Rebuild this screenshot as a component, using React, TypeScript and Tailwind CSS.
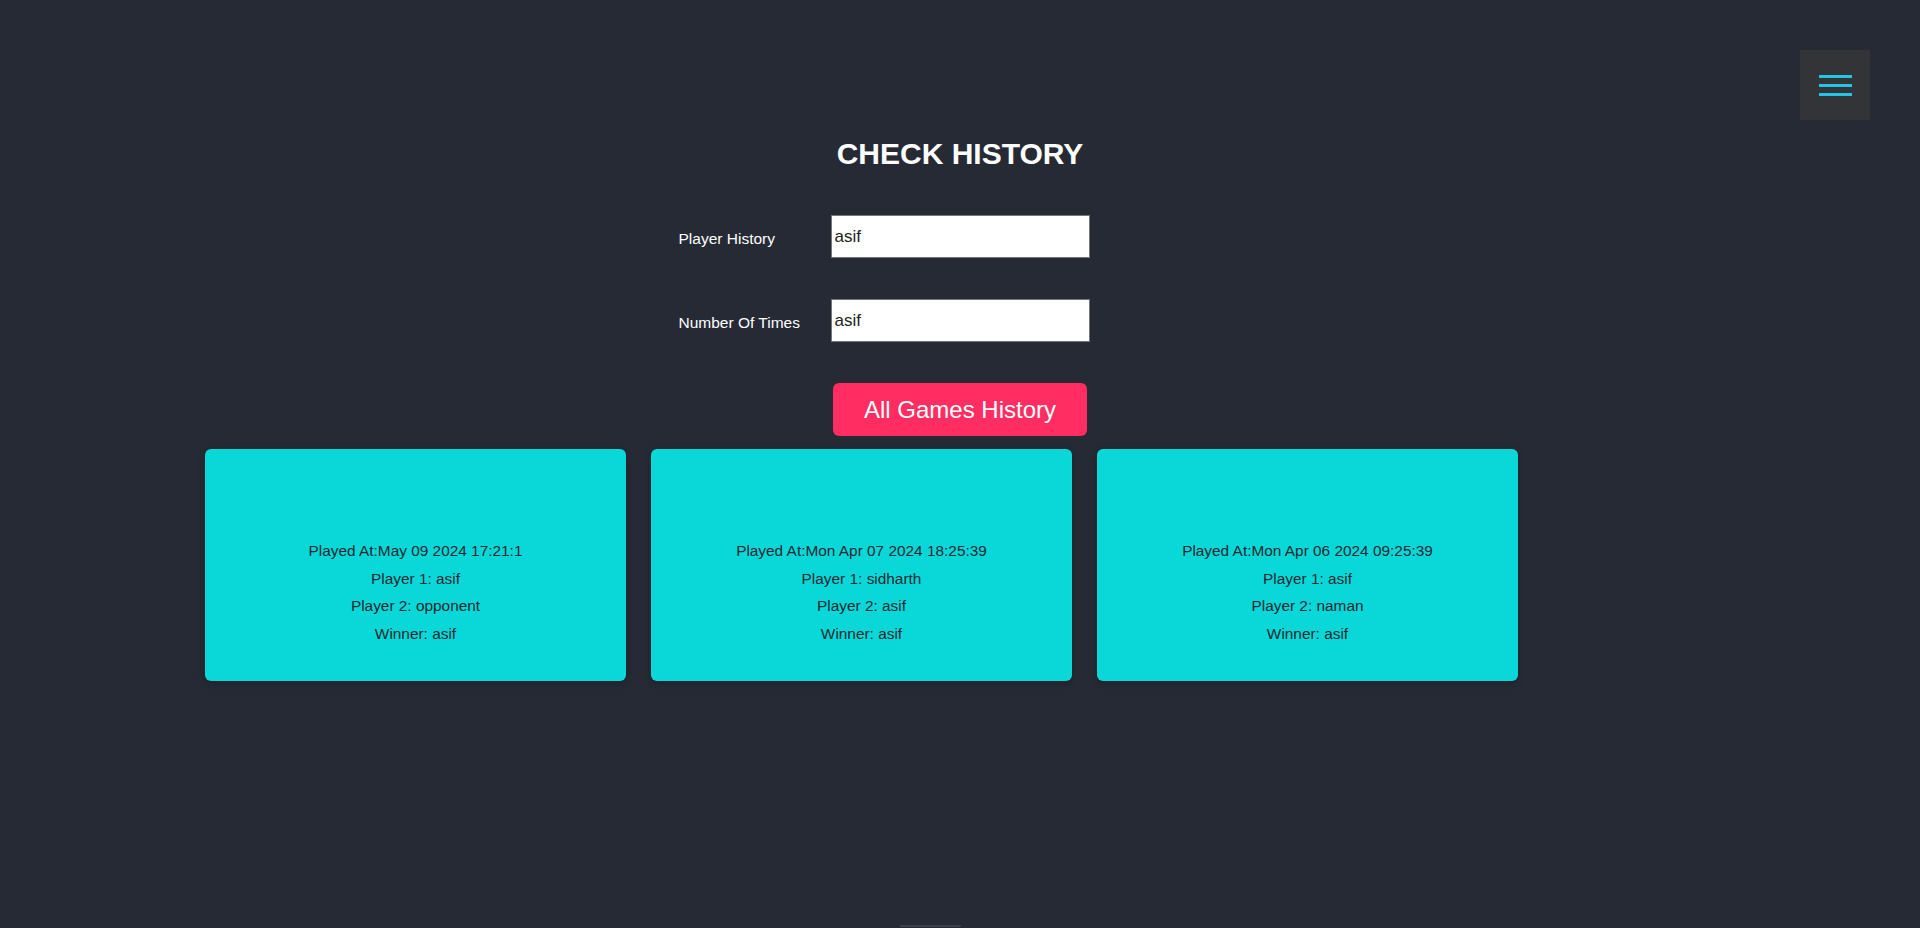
import { useState } from "react";

type Game = {
  playedAt: string;
  player1: string;
  player2: string;
  winner: string;
};

const games: Game[] = [
  { playedAt: "May 09 2024 17:21:1", player1: "asif", player2: "opponent", winner: "asif" },
  { playedAt: "Mon Apr 07 2024 18:25:39", player1: "sidharth", player2: "asif", winner: "asif" },
  { playedAt: "Mon Apr 06 2024 09:25:39", player1: "asif", player2: "naman", winner: "asif" },
];

function MenuButton() {
  return (
    <button className="absolute right-[50px] top-[50px] flex h-[70px] w-[70px] flex-col items-center justify-center gap-[6px] bg-[#333438]">
      <span className="block h-[3px] w-[33px] bg-[#22c6e4]" />
      <span className="block h-[3px] w-[33px] bg-[#22c6e4]" />
      <span className="block h-[3px] w-[33px] bg-[#22c6e4]" />
    </button>
  );
}

export default function App() {
  const [player, setPlayer] = useState("asif");
  const [times, setTimes] = useState("asif");

  return (
    <div
      className="relative flex h-[928px] flex-col overflow-hidden bg-[#262a35]"
      style={{ fontFamily: '"Liberation Sans", Arial, sans-serif' }}
    >
      <MenuButton />

      <h1 className="mt-[136px] text-center text-[30px] font-bold leading-[36px] text-white">
        CHECK HISTORY
      </h1>

      {/* Search form: inputs centred on the page, labels to their left */}
      <div className="mx-auto mt-[43px] flex w-[563px] flex-col gap-[41px] pr-[152px]">
        <div className="flex items-center">
          <label className="w-[152px] pt-[5px] text-[15.5px] text-white">Player History</label>
          <input
            value={player}
            onChange={(e) => setPlayer(e.target.value)}
            className="h-[43px] w-[259px] border border-[#767676] bg-white px-[3px] pt-[1px] pb-[1px] text-[17px] text-[#222] outline-none"
          />
        </div>
        <div className="flex items-center">
          <label className="w-[152px] pt-[5px] text-[15.5px] text-white">Number Of Times</label>
          <input
            value={times}
            onChange={(e) => setTimes(e.target.value)}
            className="h-[43px] w-[259px] border border-[#767676] bg-white px-[3px] pt-[1px] pb-[1px] text-[17px] text-[#222] outline-none"
          />
        </div>
      </div>

      <button className="mx-auto mt-[41px] flex h-[53px] w-[254px] items-center justify-center rounded-[6px] bg-[#ff2d62] text-[24px] text-white">
        All Games History
      </button>

      {/* Games list */}
      <div className="mt-[13px] flex gap-[25px] pl-[205px]">
        {games.map((g, i) => (
          <div
            key={i}
            className="h-[232px] w-[421px] rounded-[6px] bg-[#0ad8d8] pt-[88px] text-center text-[15.4px] leading-[27.5px] text-[#1c2a30] shadow-[0_2px_6px_rgba(0,0,0,0.25)]"
          >
            <p>Played At:{g.playedAt}</p>
            <p>Player 1: {g.player1}</p>
            <p>Player 2: {g.player2}</p>
            <p>Winner: {g.winner}</p>
          </div>
        ))}
      </div>

      <div className="mt-auto mb-[1px] ml-[900px] h-[2px] w-[61px] bg-[#3c3f47]" />
    </div>
  );
}
